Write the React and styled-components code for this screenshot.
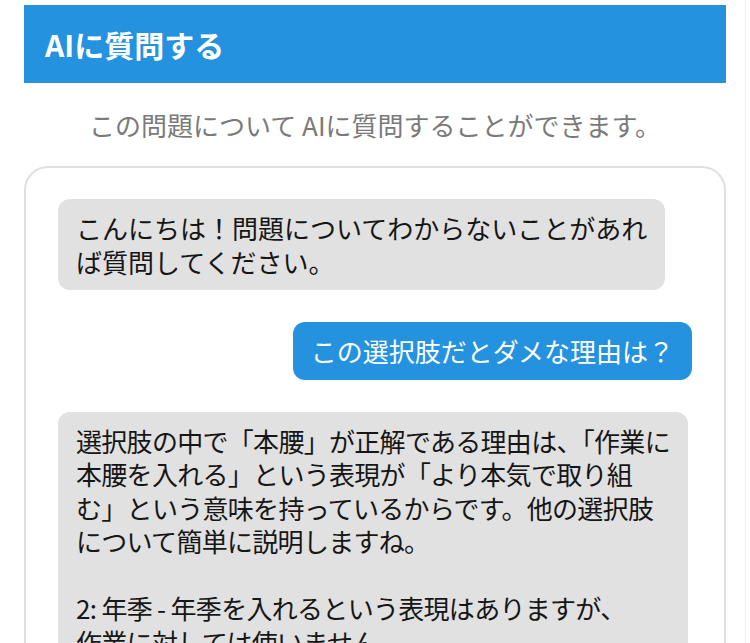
import React from 'react'
import styled, { createGlobalStyle } from 'styled-components'

// the long answer is set a touch tighter so its lines break where the app breaks them
const messages = [
  {
    role: 'ai',
    text: 'こんにちは！問題についてわからないことがあれ\nば質問してください。',
  },
  {
    role: 'user',
    text: 'この選択肢だとダメな理由は？',
  },
  {
    role: 'ai',
    dense: true,
    text:
      '選択肢の中で「本腰」が正解である理由は、「作業に\n' +
      '本腰を入れる」という表現が「より本気で取り組\n' +
      'む」という意味を持っているからです。他の選択肢\n' +
      'について簡単に説明しますね。\n' +
      '\n' +
      '2: 年季 - 年季を入れるという表現はありますが、\n' +
      '作業に対しては使いません。',
  },
]

export default function App() {
  return (
    <>
      <GlobalStyle />
      <Page>
        <Header>
          <Title>AIに質問する</Title>
        </Header>
        <Lead>この問題について AIに質問することができます。</Lead>
        <ChatCard>
          {messages.map((msg, index) => (
            <Bubble key={index} $role={msg.role} $dense={msg.dense}>
              {msg.text}
            </Bubble>
          ))}
        </ChatCard>
      </Page>
    </>
  )
}

const GlobalStyle = createGlobalStyle`
  html, body {
    margin: 0;
    padding: 0;
    background: #ffffff;
    overflow: hidden;
  }
  body {
    font-family: "Noto Sans CJK JP", "Noto Sans", sans-serif;
    color: #1a1a1a;
  }
`

const Page = styled.div`
  box-sizing: border-box;
  width: 746px;
  min-height: 100vh;
  padding: 5px 19px 0 24px;
  border-right: 1px solid #f1f1f1;
`

const Header = styled.header`
  height: 78px;
  background: #2592df;
  display: flex;
  align-items: center;
  padding: 0 21px;
`

const Title = styled.h1`
  margin: 0;
  color: #ffffff;
  font-size: 30px;
  font-weight: 600;
  line-height: 1;
`

const Lead = styled.p`
  margin: 25px 0 0 0;
  text-align: center;
  color: #7a7a7a;
  font-size: 26px;
  line-height: 34px;
`

const ChatCard = styled.div`
  margin-top: 24px;
  border: 2px solid #e0e0e0;
  border-radius: 24px;
  padding: 31px 32px;
  display: flex;
  flex-direction: column;
  gap: 32px;
`

const Bubble = styled.div`
  align-self: ${({ $role }) => ($role === 'user' ? 'flex-end' : 'flex-start')};
  background: ${({ $role }) => ($role === 'user' ? '#2592df' : '#e1e1e1')};
  color: ${({ $role }) => ($role === 'user' ? '#ffffff' : '#161616')};
  border-radius: 12px;
  padding: 12px 18px;
  font-size: 26px;
  line-height: 33.5px;
  white-space: pre-wrap;
  letter-spacing: ${({ $dense }) => ($dense ? '-0.7px' : 'normal')};
`
